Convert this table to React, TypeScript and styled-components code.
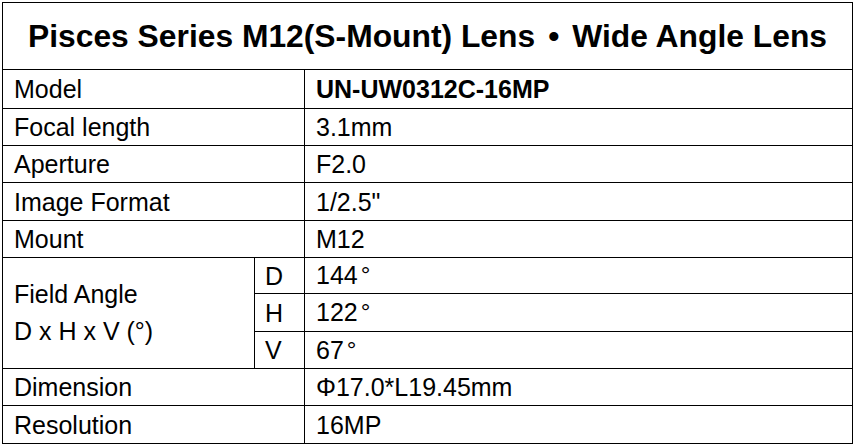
import React from "react";
import styled, { createGlobalStyle } from "styled-components";

const GlobalStyle = createGlobalStyle`
  html, body {
    margin: 0;
    padding: 0;
    background: #ffffff;
  }
  body {
    font-family: "Liberation Sans", Arial, sans-serif;
    color: #000;
  }
`;

const Page = styled.div`
  padding: 2px 0 0 2px;
`;

const SpecTable = styled.div`
  display: grid;
  width: 851px;
  box-sizing: border-box;
  grid-template-columns: 251px 49px 547px;
  grid-template-rows: 66px 38px 36px 36px 37px 36px 35px 37px 36px 36px 37px;
  gap: 1px;
  padding: 1px;
  background: #000;
`;

const TitleCell = styled.div`
  grid-column: 1 / span 3;
  background: #fff;
  display: flex;
  align-items: center;
  justify-content: center;
  font-weight: 700;
  font-size: 31.8px;
  white-space: nowrap;
`;

const Bullet = styled.span`
  display: inline-block;
  margin: 0 13px;
`;

const Cell = styled.div<{ $colSpan?: number; $rowSpan?: number; $bold?: boolean; $pad?: number }>`
  background: #fff;
  display: flex;
  flex-direction: column;
  justify-content: center;
  padding-left: ${(p) => p.$pad ?? 11}px;
  font-size: 25px;
  line-height: 28px;
  font-weight: ${(p) => (p.$bold ? 700 : 400)};
  white-space: nowrap;
  ${(p) => (p.$colSpan ? `grid-column: span ${p.$colSpan};` : "")}
  ${(p) => (p.$rowSpan ? `grid-row: span ${p.$rowSpan};` : "")}
`;

const FieldLine = styled.span`
  display: block;
  line-height: 37px;
`;

const Deg = styled.span`
  margin-left: 3px;
  font-size: 24px;
  position: relative;
  top: -1px;
`;

const rows: { label: string; value: string; bold?: boolean }[] = [
  { label: "Model", value: "UN-UW0312C-16MP", bold: true },
  { label: "Focal length", value: "3.1mm" },
  { label: "Aperture", value: "F2.0" },
  { label: "Image Format", value: '1/2.5"' },
  { label: "Mount", value: "M12" },
];

const angles = [
  { axis: "D", value: "144" },
  { axis: "H", value: "122" },
  { axis: "V", value: "67" },
];

const tail = [
  { label: "Dimension", value: "Φ17.0*L19.45mm" },
  { label: "Resolution", value: "16MP" },
];

export default function App() {
  return (
    <>
      <GlobalStyle />
      <Page>
        <SpecTable>
          <TitleCell>
            Pisces Series M12(S-Mount) Lens<Bullet>•</Bullet>Wide Angle Lens
          </TitleCell>
          {rows.map((r) => (
            <React.Fragment key={r.label}>
              <Cell $colSpan={2}>{r.label}</Cell>
              <Cell $bold={r.bold}>{r.value}</Cell>
            </React.Fragment>
          ))}
          <Cell $rowSpan={3}>
            <FieldLine>Field Angle</FieldLine>
            <FieldLine>D x H x V (°)</FieldLine>
          </Cell>
          {angles.map((a) => (
            <React.Fragment key={a.axis}>
              <Cell $pad={10}>{a.axis}</Cell>
              <Cell>
                <span>
                  {a.value}
                  <Deg>°</Deg>
                </span>
              </Cell>
            </React.Fragment>
          ))}
          {tail.map((r) => (
            <React.Fragment key={r.label}>
              <Cell $colSpan={2}>{r.label}</Cell>
              <Cell>{r.value}</Cell>
            </React.Fragment>
          ))}
        </SpecTable>
      </Page>
    </>
  );
}
